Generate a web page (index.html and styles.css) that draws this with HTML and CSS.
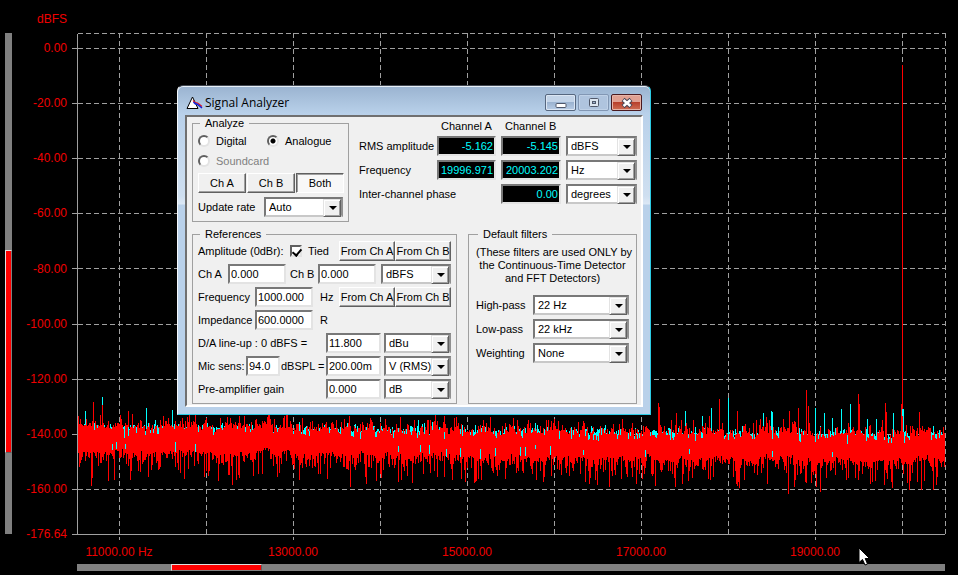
FILE: index.html
```html
<!DOCTYPE html>
<html lang="en">
<head>
<meta charset="utf-8">
<title>Signal Analyzer</title>
<link rel="stylesheet" href="styles.css">
</head>
<body>
<main class="scope">
  <div class="axis-unit">dBFS</div>
  <div class="track track-v"><div class="thumb-v"></div></div>
  <div class="y-axis">
    <ul class="y-ticks">
      <li>0.00</li><li>-20.00</li><li>-40.00</li><li>-60.00</li><li>-80.00</li><li>-100.00</li><li>-120.00</li><li>-140.00</li><li>-160.00</li>
    </ul>
    <div class="y-floor">-176.64</div>
  </div>
  <svg class="plot" id="plot" viewBox="0 0 874 507" preserveAspectRatio="none" role="img" aria-label="Spectrum"></svg>
  <ul class="x-ticks">
    <li>11000.00 Hz</li><li>13000.00</li><li>15000.00</li><li>17000.00</li><li>19000.00</li>
  </ul>
  <div class="track track-h"><div class="thumb-h"></div></div>
</main>

<section class="window" aria-label="Signal Analyzer">
  <header class="titlebar">
    <svg class="app-icon" width="17" height="14" viewBox="0 0 17 14" aria-hidden="true">
      <path d="M1 12.500 L6.500 1 L12 12.500 Z" fill="#fff" stroke="#000"/>
      <path d="M7 4.500 L9 6.500 L11.500 7 L13.500 8.500 L16 10.500" fill="none" stroke="#e01020" stroke-width="1.200"/>
      <path d="M7.500 6 L9 7.500 L11.500 8.500 L13.500 10 L16 12" fill="none" stroke="#1020d8" stroke-width="1.500"/>
    </svg>
    <h1>Signal Analyzer</h1>
    <div class="caption-buttons">
      <button class="cap" type="button" aria-label="Minimize"><svg width="14" height="12" viewBox="0 0 14 12"><rect x="2" y="6.500" width="10" height="4" rx="1" fill="#fff" stroke="#50586a"/></svg></button>
      <button class="cap dim" type="button" aria-label="Maximize"><svg width="14" height="12" viewBox="0 0 14 12"><rect x="2.500" y="1.500" width="9" height="8" rx="1" fill="#dde6f0" stroke="#50586a"/><rect x="5.500" y="4.500" width="3" height="2" fill="#9db4cf" stroke="#50586a"/></svg></button>
      <button class="cap close" type="button" aria-label="Close"><svg width="14" height="12" viewBox="0 0 14 12"><path d="M3 2.500 L11 9.500 M11 2.500 L3 9.500" stroke="#4a4656" stroke-width="4.500"/><path d="M3.500 3 L10.500 9 M10.500 3 L3.500 9" stroke="#fff" stroke-width="2.500"/></svg></button>
    </div>
  </header>
  <form class="client">
    <div class="upper">
      <fieldset class="analyze">
        <legend>Analyze</legend>
        <div class="row radios">
          <label><input type="radio" name="src">Digital</label>
          <label><input type="radio" name="src" checked>Analogue</label>
        </div>
        <div class="row radios">
          <label class="off"><input type="radio" name="src" disabled>Soundcard</label>
        </div>
        <div class="row channels">
          <button class="btn" type="button">Ch A</button>
          <button class="btn" type="button">Ch B</button>
          <button class="btn pressed" type="button" aria-pressed="true">Both</button>
        </div>
        <div class="row rate">
          <label for="rate">Update rate</label>
          <span class="combo"><select id="rate"><option>Auto</option></select></span>
        </div>
      </fieldset>
      <div class="readings">
        <span class="head head-a">Channel A</span><span class="head head-b">Channel B</span>
        <span class="name">RMS amplitude</span><output>-5.162</output><output>-5.145</output>
        <span class="combo"><select aria-label="Amplitude unit"><option>dBFS</option></select></span>
        <span class="name">Frequency</span><output>19996.971</output><output>20003.202</output>
        <span class="combo"><select aria-label="Frequency unit"><option>Hz</option></select></span>
        <span class="name phase">Inter-channel phase</span><output>0.00</output>
        <span class="combo"><select aria-label="Phase unit"><option>degrees</option></select></span>
      </div>
    </div>
    <div class="lower">
      <fieldset class="refs">
        <legend>References</legend>
        <div class="row r-amp">
          <span>Amplitude (0dBr):</span>
          <label class="tick"><input type="checkbox" checked>Tied</label>
          <button class="btn" type="button">From Ch A</button>
          <button class="btn" type="button">From Ch B</button>
        </div>
        <div class="row r-ch">
          <label for="cha">Ch A</label><input class="field" id="cha" value="0.000">
          <label class="pad" for="chb">Ch B</label><input class="field" id="chb" value="0.000">
          <span></span><span class="combo"><select aria-label="Reference unit"><option>dBFS</option></select></span>
        </div>
        <div class="row r-freq">
          <label for="freq">Frequency</label><input class="field" id="freq" value="1000.000">
          <span class="unit">Hz</span>
          <button class="btn" type="button">From Ch A</button>
          <button class="btn" type="button">From Ch B</button>
        </div>
        <div class="row r-freq">
          <label for="imp">Impedance</label><input class="field" id="imp" value="600.0000">
          <span class="unit">R</span>
        </div>
        <div class="row r-line">
          <label for="line">D/A line-up : 0 dBFS =</label><input class="field" id="line" value="11.800">
          <span class="combo"><select aria-label="Line-up unit"><option>dBu</option></select></span>
        </div>
        <div class="row r-line">
          <span class="mic"><label for="spl">Mic sens:</label><input class="field" id="spl" value="94.0"><label for="mic">dBSPL =</label></span>
          <input class="field" id="mic" value="200.00m">
          <span class="combo"><select aria-label="Microphone unit"><option>V (RMS)</option></select></span>
        </div>
        <div class="row r-line">
          <label for="gain">Pre-amplifier gain</label><input class="field" id="gain" value="0.000">
          <span class="combo"><select aria-label="Gain unit"><option>dB</option></select></span>
        </div>
      </fieldset>
      <fieldset class="filters">
        <legend>Default filters</legend>
        <p>(These filters are used ONLY by<br>the Continuous-Time Detector<br>and FFT Detectors)</p>
        <div class="row r-filter"><label for="hp">High-pass</label><span class="combo"><select id="hp"><option>22 Hz</option></select></span></div>
        <div class="row r-filter"><label for="lp">Low-pass</label><span class="combo"><select id="lp"><option>22 kHz</option></select></span></div>
        <div class="row r-filter"><label for="wt">Weighting</label><span class="combo"><select id="wt"><option>None</option></select></span></div>
      </fieldset>
    </div>
  </form>
</section>

<svg class="cursor" width="13" height="20" viewBox="0 0 13 20" aria-hidden="true">
  <path d="M1 1 V15.500 L4.500 12.500 L7 18 L9.500 17 L7.200 11.500 H11.500 Z" fill="#fff" stroke="#000"/>
</svg>
<script src="plot.js"></script>
</body>
</html>
```
FILE: plot.js
```js
(function () {
  var OX = 72, OY = 33;
  var svg = document.getElementById("plot");

  function line(d, cls) {
    var p = document.createElementNS("http://www.w3.org/2000/svg", "path");
    p.setAttribute("d", d);
    p.setAttribute("class", cls);
    svg.appendChild(p);
  }
  function v(x, y1, y2) {
    return "M" + (x - OX + 0.5) + " " + (y1 - OY) + "V" + (y2 - OY);
  }
  function h(y, x1, x2) {
    return "M" + (x1 - OX) + " " + (y - OY + 0.5) + "H" + (x2 - OX);
  }

  // Grid: major frequencies extend below the baseline as tick marks.
  var dashed = "", solid = "";
  [119, 206, 293, 380, 467, 554, 641, 728, 815, 902, 945].forEach(function (x, i) {
    dashed += v(x, 33, i % 2 === 0 && i < 10 ? 540 : 534);
  });
  dashed += h(33, 78, 945);
  [48, 103, 158, 213, 268, 324, 379, 434, 489].forEach(function (y) {
    dashed += h(y, 78, 945);
    solid += h(y, 72, 77);
  });
  solid += h(534, 72, 945) + v(77, 34, 534);
  line(dashed, "grid dashed");
  line(solid, "grid");

  // Noise floor.
  var seed = 20003;
  function rnd() {
    seed = (seed * 1103515245 + 12345) % 2147483648;
    return seed / 2147483648;
  }
  function tail(mean) { return -Math.log(1 - rnd() * 0.98) * mean; }

  var top = {}, bottom = {}, cyanTop = {};
  [[93,402],[102,405],[128,411],[658,403],[659,407],[676,413],[719,399],[737,411],[789,411],[798,408],
   [806,390],[808,406],[858,394],[859,404],[885,403],[886,412],[901,404],[902,65],[919,412]].forEach(function (p) { top[p[0]] = p[1]; });
  [[91,486],[108,481],[114,480],[184,479],[204,477],[232,485],[236,480],[262,474],[277,477],
   [327,479],[350,487],[366,484],[398,482],[412,483],[437,477],[478,479],[536,480],[609,487],
   [692,478],[708,479],[744,480],[767,484],[788,494],[794,487],[806,483],[820,492],[846,480],
   [858,480],[870,484],[887,479],[907,483],[921,490],[933,490],[936,485]].forEach(function (p) { bottom[p[0]] = p[1]; });
  [[85,411],[102,397],[146,408],[172,410],[685,411],[711,408],[728,398],[763,413],[771,411],[772,412],
   [702,416],[815,408],[824,413],[841,409],[850,404],[832,418],[867,419],[876,419],[893,413],[903,409]].forEach(function (p) { cyanTop[p[0]] = p[1]; });

  var red = "", cyan = "", inner = "", drift = 0;
  for (var x = 78; x < 945; x++) {
    var shift = 8 * (x - 78) / 867;
    // Neighbouring bins swell and shrink together.
    drift = drift * 0.8 + (rnd() - 0.5) * 4;
    var rt = 428 + shift + drift - Math.min(tail(5), 13);
    var rb = 449 + shift + drift + 2 + Math.min(tail(8.5), 26);
    var ct = 426 + shift + rnd() * 6 - Math.min(tail(2.5), 12);
    if (rnd() < 0.2) { rt += 5; }
    if (top[x]) { rt = top[x]; }
    if (bottom[x]) { rb = bottom[x]; }
    if (cyanTop[x]) { ct = cyanTop[x]; }
    cyan += v(x, Math.round(ct), 445);
    red += v(x, Math.round(rt), Math.round(rb));
    if (rnd() < 0.04) {
      var m = Math.round((rnd() < 0.4 ? 426 : 441) + shift + rnd() * 5);
      inner += v(x, m, m + 4 + Math.round(rnd() * 6));
    }
  }
  line(cyan, "cyan");
  line(red, "red");
  line(inner + v(902, 409, 416), "cyan");
})();
```
FILE: styles.css
```css
* { box-sizing: border-box; }

body {
  margin: 0;
  background: #000;
  overflow: hidden;
  font-family: "Liberation Sans", Arial, sans-serif;
  font-size: 11px;
  color: #000;
}

ul { list-style: none; margin: 0; padding: 0; }

/* Spectrum display */
.scope {
  display: grid;
  grid-template-columns: 7px 55px 5px 1fr;
  grid-template-rows: 33px 1fr 24px 7px;
  height: 100vh;
  padding: 0 12px 4px 5px;
  color: #f00000;
  font-size: 12px;
  line-height: 14px;
}
.axis-unit { grid-area: 1 / 2; text-align: right; padding-top: 12px; }
.track { background: #808080; }
.track-v { grid-area: 2 / 1; margin-bottom: 6px; display: flex; flex-direction: column; }
.track-v::before { content: ""; height: 43.3%; }
.thumb-v {
  height: 40.5%;
  background: #f00;
  border: 1px solid #e0e0e0;
  border-right-color: #808080;
  border-bottom-color: #606060;
}
.track-h { grid-area: 4 / 4; margin: 0 1px 0 5px; }
.thumb-h {
  width: 10.5%;
  height: 7px;
  margin-left: 10.8%;
  background: #f00;
  border: 1px solid #e0e0e0;
  border-right-color: #606060;
  border-bottom-color: #808080;
}
.y-axis {
  grid-area: 2 / 2;
  display: flex;
  flex-direction: column;
  margin: 8px 0 -1px;
  text-align: right;
}
.y-ticks { flex: 1; display: flex; flex-direction: column; justify-content: space-between; }
.y-floor { margin-top: 31px; }
.plot { grid-area: 2 / 4; width: 100%; height: 100%; min-height: 0; display: block; }
.plot path { fill: none; stroke-width: 1; shape-rendering: crispEdges; }
.plot .grid { stroke: #a0a0a0; }
.plot .dashed { stroke-dasharray: 5 3; }
.plot .red { stroke: #f00; }
.plot .cyan { stroke: #0ff; }
.x-ticks {
  grid-area: 3 / 4;
  display: grid;
  grid-template-columns: repeat(5, 1fr);
  margin: 5px 44px 0 -40px;
  text-align: center;
}

/* Mouse pointer */
.cursor { position: absolute; left: 858px; top: 547px; }

/* Floating window */
.window {
  position: absolute;
  left: 177px;
  top: 85px;
  width: 474px;
  padding: 0 7px 7px;
  border: 1px solid #2ccbe4;
  border-top-color: #404650;
  border-left-color: #f4f8fc;
  border-radius: 6px 6px 0 0;
  background: linear-gradient(#9ab3d0, #b9d1ea 28px, #cfdff0 110px, #dce8f5 118px, #b9d1ea 119px);
  box-shadow: inset 0 1px 0 #e8f0f8;
}
.titlebar { display: flex; align-items: center; height: 29px; padding: 4px 1px 0; }
.app-icon { margin-right: 2px; }
.titlebar h1 {
  margin: 0;
  flex: 1;
  font: 12px/16px "Open Sans", "Noto Sans", sans-serif;
}
.caption-buttons { display: flex; gap: 2px; }
.cap {
  width: 31px;
  height: 17px;
  padding: 0;
  display: flex;
  align-items: center;
  justify-content: center;
  border: 1px solid #56677f;
  border-radius: 2px;
  background: linear-gradient(#c3d4e8 45%, #9bb3d0 50%, #b8cde6);
  box-shadow: inset 0 0 0 1px #dbe6f3;
}
.cap.dim { border-color: #8297b4; background: #afc4de; box-shadow: inset 0 0 0 1px #bfd1e7; }
.cap.close {
  border-color: #4a1a20;
  background: linear-gradient(#e0a092 45%, #b8402c 50%, #cf6f56);
  box-shadow: inset 0 0 0 1px #e6b4a8;
}
.client {
  padding: 0 4px 1px 5px;
  margin: 0;
  background: #f0f0f0;
  border: 2px solid #fff;
  border-top-color: #707070;
  border-left-color: #707070;
}
.upper { display: grid; grid-template-columns: 157px 1fr; column-gap: 10px; height: 105px; }
.lower { display: grid; grid-template-columns: 265px 1fr; column-gap: 11px; height: 176px; margin-top: 6px; }

fieldset {
  margin: 0;
  min-width: 0;
  border: 1px solid #a0a0a0;
}
legend { margin-left: 2px; padding: 0 5px; line-height: 12px; }
.row { display: grid; align-items: center; height: 20px; white-space: nowrap; }
label { display: block; }

/* Controls */
.btn {
  height: 20px;
  padding: 0;
  font: inherit;
  color: #000;
  background: #f0f0f0;
  border: 1px solid #fff;
  border-right-color: #606060;
  border-bottom-color: #606060;
  box-shadow: inset -1px -1px 0 #a0a0a0;
  white-space: nowrap;
}
.btn.pressed {
  background: #f8f8f8;
  border-color: #606060 #fff #fff #606060;
  box-shadow: inset 1px 1px 0 #a0a0a0;
}
.field, select, output {
  width: 100%;
  height: 20px;
  margin: 0;
  font: inherit;
  color: #000;
  background: #fff;
  border: 2px solid #e3e3e3;
  border-top-color: #787878;
  border-left-color: #787878;
  border-radius: 0;
  padding: 0 1px;
}
select { appearance: none; display: block; padding: 0 18px 0 3px; border-color: #787878 #909090 #c8c8c8 #787878; }
.combo { position: relative; display: block; min-width: 0; }
.combo::after {
  content: "";
  position: absolute;
  top: 2px;
  right: 2px;
  width: 16px;
  height: 16px;
  background: #f0f0f0;
  border: 1px solid #e3e3e3;
  border-right-color: #606060;
  border-bottom-color: #606060;
  box-shadow: inset 1px 1px 0 #fff, inset -1px -1px 0 #a0a0a0;
  pointer-events: none;
}
.combo::before {
  content: "";
  position: absolute;
  z-index: 1;
  top: 9px;
  right: 6px;
  border: 4px solid transparent;
  border-top-color: #000;
  border-bottom: 0;
  pointer-events: none;
}
output {
  display: block;
  background: #000;
  color: #0ff;
  text-align: right;
  line-height: 16px;
}
input[type="radio"], input[type="checkbox"] {
  appearance: none;
  flex: none;
  width: 12px;
  height: 12px;
  margin: 0;
  background: #fff;
  border: 2px solid #e3e3e3;
  border-top-color: #606060;
  border-left-color: #606060;
}
input[type="radio"] { border-radius: 50%; }
input[type="radio"]:checked { background: radial-gradient(circle, #000 2px, #fff 3px); }
input[type="checkbox"] { position: relative; }
input[type="checkbox"]:checked::after {
  content: "";
  position: absolute;
  left: 2px;
  top: 0;
  width: 4px;
  height: 7px;
  border: solid #000;
  border-width: 0 2px 2px 0;
  rotate: 40deg;
}

/* Analyze group */
.analyze { padding: 2px 4px 0 5px; }
.radios { grid-template-columns: 69px 1fr; }
.radios label, .tick { display: flex; align-items: center; gap: 6px; }
.off { color: #808080; }
.channels { grid-template-columns: repeat(3, 1fr); column-gap: 1px; margin-top: 2px; }
.rate { grid-template-columns: 66px 1fr; margin-top: 4px; }
.rate .combo { margin-right: 1px; }

/* Channel readings */
.readings {
  display: grid;
  grid-template-columns: 73px 59px 60px 1fr;
  grid-template-rows: 15px 20px 20px 20px;
  gap: 4px 5px;
  align-items: center;
  align-content: start;
  white-space: nowrap;
}
.readings .name { margin-right: -5px; }
.head { align-self: end; padding-left: 4px; }
.head-a { grid-column: 2; }
.head-b { grid-column: 3 / 5; }
.readings .phase { grid-column: 1 / 3; }

/* References group */
.refs { padding: 1px 5px 0; }
.refs .row + .row { margin-top: 3px; }
.r-amp { grid-template-columns: 92px 1fr 56px 56px; }
.r-ch { grid-template-columns: 30px 58px 32px 58px 5px 1fr; }
.r-ch .pad { padding-left: 4px; }
.r-freq { grid-template-columns: 57px 58px 1fr 56px 56px; }
.unit { padding-left: 7px; }
.r-line { grid-template-columns: 128px 55px 1fr; }
.r-line .combo { margin-left: 3px; }
.mic { display: grid; grid-template-columns: 47px 34px 1fr; align-items: center; column-gap: 1px; }

/* Filters group */
.filters { padding: 6px 7px 0; }
.filters p { margin: 0 0 10px; line-height: 13px; text-align: center; white-space: nowrap; }
.r-filter { grid-template-columns: 57px 1fr; margin-bottom: 4px; }
```
